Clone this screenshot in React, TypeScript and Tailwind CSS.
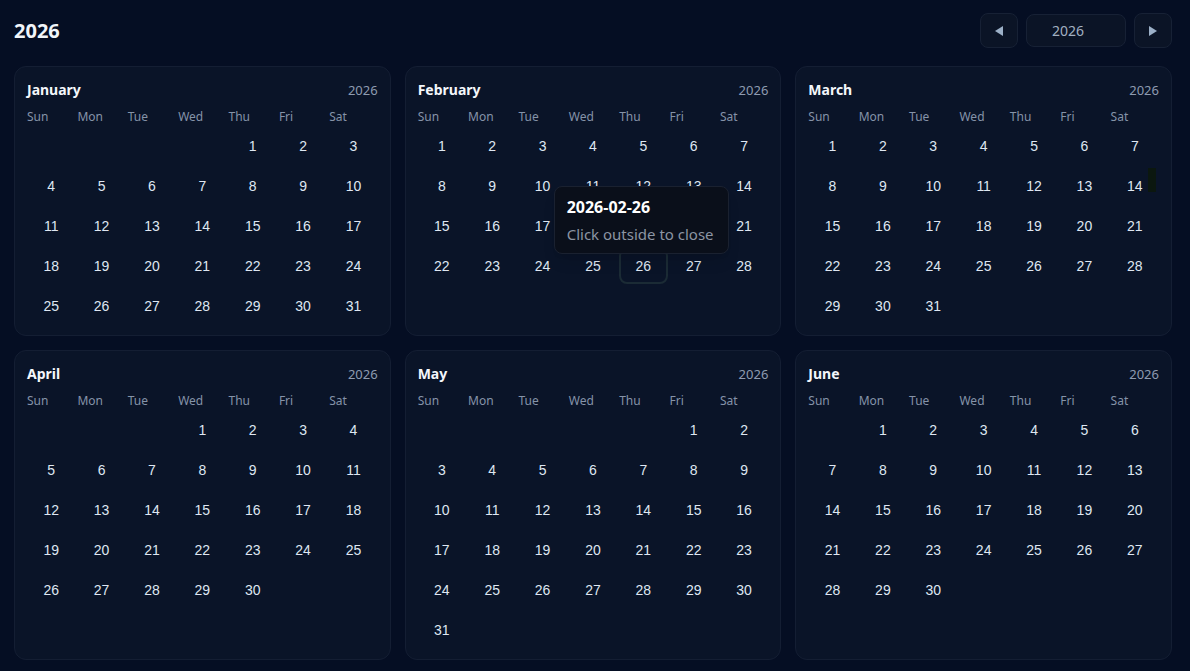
import React from 'react';

const MONTHS = ['January', 'February', 'March', 'April', 'May', 'June'];
const WEEKDAYS = ['Sun', 'Mon', 'Tue', 'Wed', 'Thu', 'Fri', 'Sat'];
const YEAR = 2026;

const UI_FONT = "font-['Noto_Sans','Open_Sans',sans-serif]";
const NUM_FONT = "font-['Liberation_Sans',Arial,sans-serif]";

function buildCells(month: number) {
    const first = new Date(YEAR, month, 1).getDay();
    const total = new Date(YEAR, month + 1, 0).getDate();
    const cells: (number | null)[] = [];
    for (let i = 0; i < first; i++) cells.push(null);
    for (let d = 1; d <= total; d++) cells.push(d);
    return cells;
}

function Triangle({ dir }: { dir: 'left' | 'right' }) {
    return (
        <svg width="10" height="12" viewBox="0 0 10 12" className="text-[#9cb0c8]">
            {dir === 'left' ? (
                <polygon points="9,1 9,11 1,6" fill="currentColor" />
            ) : (
                <polygon points="1,1 1,11 9,6" fill="currentColor" />
            )}
        </svg>
    );
}

function MonthCard({ month }: { month: number }) {
    const cells = buildCells(month);
    const isFeb = month === 1;
    const isMar = month === 2;

    return (
        <div className="relative bg-[#0a1428] border border-[#141e33] rounded-xl px-3 pt-[13px] pb-[11px]">
            {/* header */}
            <div className="flex items-baseline justify-between h-5 mb-[9px]">
                <span className={`${UI_FONT} text-[14px] leading-5 font-bold text-[#f4f7fb]`}>{MONTHS[month]}</span>
                <span className={`${UI_FONT} text-[13px] leading-5 text-[#8e9bb0]`}>{YEAR}</span>
            </div>

            {/* weekdays */}
            <div className="grid grid-cols-7 gap-x-0.5 h-4 mb-[3px]">
                {WEEKDAYS.map((w) => (
                    <span key={w} className={`${UI_FONT} text-[12px] leading-4 text-[#8593a8]`}>{w}</span>
                ))}
            </div>

            {/* days */}
            <div className="grid grid-cols-7 gap-x-0.5 gap-y-1">
                {cells.map((d, i) => {
                    const selected = isFeb && d === 26;
                    return (
                        <div
                            key={i}
                            className={`h-9 flex items-center justify-center rounded-lg ${NUM_FONT} text-[14px] text-[#dfe7f2] ${selected ? 'border-2 border-[#1b2b35]' : ''}`}
                        >
                            {d ?? ''}
                        </div>
                    );
                })}
            </div>

            {isFeb && (
                <div className="absolute left-[148px] top-[119px] w-[175px] bg-[#0a0f1a] border border-[#1a2130] rounded-lg px-3 pt-[10px] pb-[9px] shadow-lg">
                    <div className={`${UI_FONT} text-[16px] font-bold text-white leading-5`}>2026-02-26</div>
                    <div className={`${UI_FONT} text-[15px] text-[#8c95a3] leading-5 mt-[7px]`}>Click outside to close</div>
                </div>
            )}

            {isMar && (
                <div className="absolute left-[352px] top-[101px] w-2 h-6 bg-[#0b170f]" />
            )}
        </div>
    );
}

export default function App() {
    return (
        <div className="min-h-screen bg-[#050e23] pl-3.5 pr-[18px] pt-[13px] pb-4">
            <div className="flex items-center justify-between h-[35px] mb-[18px]">
                <h1 className={`${UI_FONT} text-[20px] font-bold text-[#f1f5f9]`}>2026</h1>
                <div className="flex items-center gap-2">
                    <button className="w-[38px] h-[35px] flex items-center justify-center rounded-lg bg-[#0b1426] border border-[#172135]">
                        <Triangle dir="left" />
                    </button>
                    <div className={`w-[100px] h-[33px] flex items-center justify-center pr-4 rounded-lg bg-[#0b1426] border border-[#172135] ${UI_FONT} text-[14px] text-[#a2b0c2]`}>
                        2026
                    </div>
                    <button className="w-[38px] h-[35px] flex items-center justify-center rounded-lg bg-[#0b1426] border border-[#172135]">
                        <Triangle dir="right" />
                    </button>
                </div>
            </div>

            <div className="grid grid-cols-3 gap-3.5">
                {[0, 1, 2, 3, 4, 5].map((m) => (
                    <MonthCard key={m} month={m} />
                ))}
            </div>
        </div>
    );
}
